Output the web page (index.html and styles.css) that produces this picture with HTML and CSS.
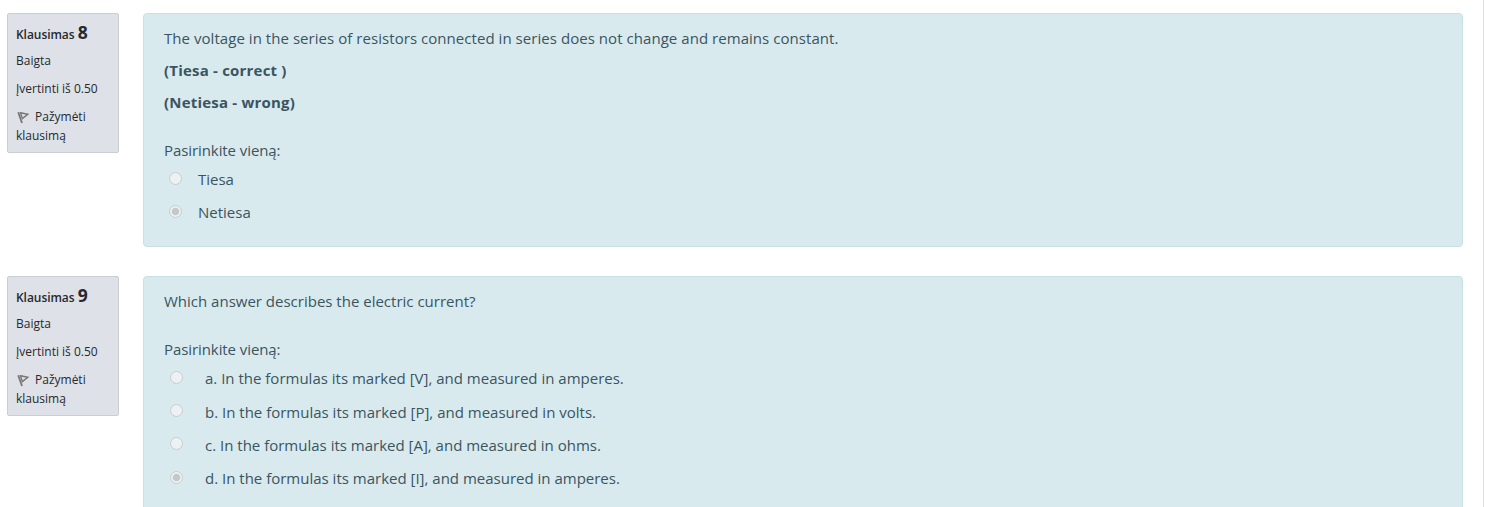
FILE: index.html
```html
<!DOCTYPE html>
<html lang="lt">
<head>
<meta charset="utf-8">
<title>Klausimai</title>
<link rel="stylesheet" href="styles.css">
</head>
<body>
<main class="quiz">
  <section class="question first">
    <aside class="info">
      <h3 class="number">Klausimas <span class="digit">8</span></h3>
      <div class="state">Baigta</div>
      <div class="grade">Įvertinti iš 0.50</div>
      <div class="flag"><svg class="flag-icon" width="12" height="13" viewBox="0 0 12 13"><path d="M1.2 1.2 5 12" fill="none" stroke="#777" stroke-width="1.8"/><path d="M3.5 1.8 10.8 3.2 5.4 7.6Z" fill="none" stroke="#777" stroke-width="1.4"/></svg><span>Pažymėti<br></span>klausimą</div>
    </aside>
    <div class="content">
      <p class="text t1"><span>The voltage in the series of resistors connected in series does not change and remains constant.</span></p>
      <p class="text"><b class="b1">(Tiesa - correct )</b></p>
      <p class="text"><b class="b2">(Netiesa - wrong)</b></p>
      <div class="prompt"><span>Pasirinkite vieną:</span></div>
      <div class="answers truefalse">
        <label class="answer"><i class="radio"></i><span>Tiesa</span></label>
        <label class="answer"><i class="radio checked"></i><span>Netiesa</span></label>
      </div>
    </div>
  </section>
  <section class="question second">
    <aside class="info">
      <h3 class="number">Klausimas <span class="digit">9</span></h3>
      <div class="state">Baigta</div>
      <div class="grade">Įvertinti iš 0.50</div>
      <div class="flag"><svg class="flag-icon" width="12" height="13" viewBox="0 0 12 13"><path d="M1.2 1.2 5 12" fill="none" stroke="#777" stroke-width="1.8"/><path d="M3.5 1.8 10.8 3.2 5.4 7.6Z" fill="none" stroke="#777" stroke-width="1.4"/></svg><span>Pažymėti<br></span>klausimą</div>
    </aside>
    <div class="content">
      <p class="text t2"><span>Which answer describes the electric current?</span></p>
      <div class="prompt"><span>Pasirinkite vieną:</span></div>
      <div class="answers multi">
        <label class="answer"><i class="radio"></i><span>a. In the formulas its marked [V], and measured in amperes.</span></label>
        <label class="answer"><i class="radio"></i><span>b. In the formulas its marked [P], and measured in volts.</span></label>
        <label class="answer"><i class="radio"></i><span>c. In the formulas its marked [A], and measured in ohms.</span></label>
        <label class="answer"><i class="radio checked"></i><span>d. In the formulas its marked [I], and measured in amperes.</span></label>
      </div>
    </div>
  </section>
</main>
</body>
</html>
```
FILE: styles.css
```css
* { box-sizing: border-box; }
body { margin: 0; height: 507px; overflow: hidden; background: #fff; font-family: "Open Sans", "Noto Sans", sans-serif; }
.quiz { width: 1484px; height: 507px; overflow: hidden; padding: 13px 20px 0 7px; border-right: 1px solid #dcdee0; }
.question { display: flex; align-items: flex-start; justify-content: space-between; }
.first { height: 263px; }
.info { width: 112px; height: 140px; padding: 8px 0 0 8px; border: 1px solid #cacdd2; border-radius: 2px; background: #dee1e7; color: #26292d; font-size: 12px; line-height: 19px; white-space: nowrap; }
.number { margin: 0; height: 25px; line-height: 20px; font-size: 12px; font-weight: 600; letter-spacing: -0.05px; }
.digit { font-size: 17.5px; font-weight: 700; }
.state, .grade { height: 28px; line-height: 28px; }
.flag { padding-top: 4px; }
.flag-icon { margin: 0 6px 0 1px; vertical-align: -3px; }
.content { width: 1320px; height: 234px; padding: 13px 20px; border: 1px solid #c8e0e5; border-radius: 4px; background: #d9eaee; color: #3a5561; font-size: 15px; line-height: 22px; white-space: nowrap; }
.second .content { height: 300px; }
.text { margin: 0 0 10px; }
.t1 { letter-spacing: 0.05px; }
.b1, .b2 { letter-spacing: 0.2px; }
.prompt { margin-top: 26px; letter-spacing: -0.08px; }
.answers { padding: 3px 0 0 5px; }
.answer { display: flex; align-items: center; height: 33.2px; padding-bottom: 3px; }
.multi .answer { height: 33.4px; }
.radio { flex: none; width: 13px; height: 13px; margin: -2px 16px 0 0; border: 1px solid #c8cdcf; border-radius: 50%; background: #ecf1f3; }
.multi .radio { margin: -2px 22px 0 1px; }
.checked { background: radial-gradient(circle, #c5c8ca 0 3.3px, #ecf1f3 4.2px); }
```
